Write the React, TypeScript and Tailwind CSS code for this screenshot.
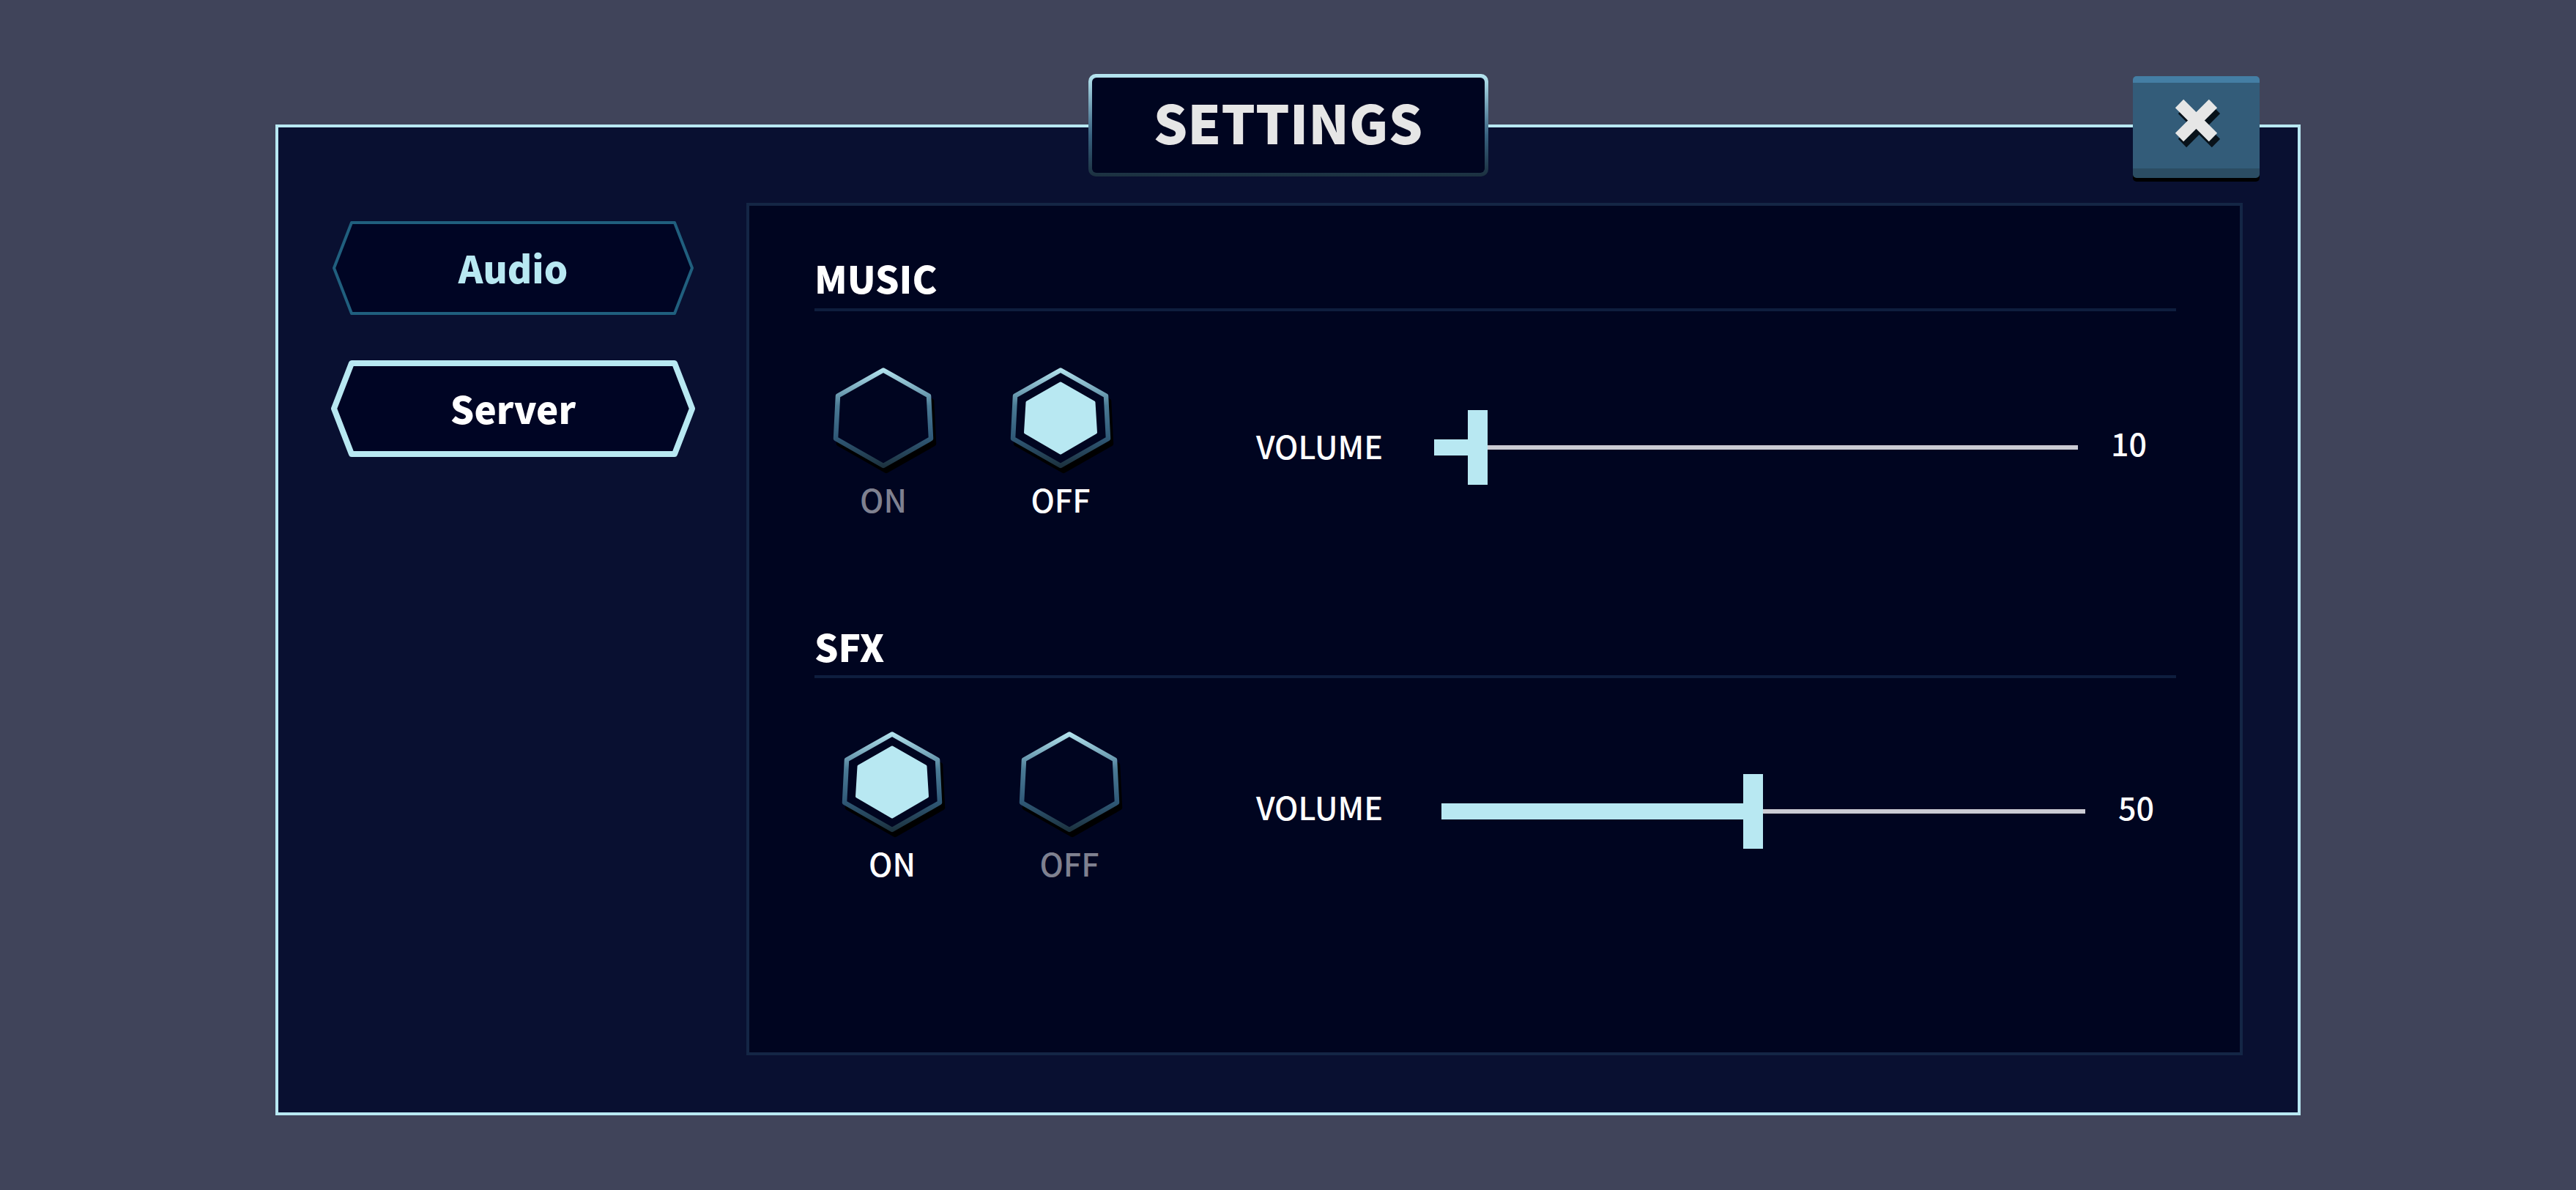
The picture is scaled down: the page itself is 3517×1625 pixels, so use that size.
import { useId, useState } from "react";

const VOLUME_MIN = 5;
const VOLUME_MAX = 98;
const THUMB = 27;

type ChannelProps = {
  title: string;
  name: string;
  initialOn: boolean;
  initialVolume: number;
  className?: string;
  titleClass: string;
  rowClass: string;
  optionsClass: string;
  labelClass: string;
};

function HexToggle({ name, label, checked, onSelect }: { name: string; label: string; checked: boolean; onSelect: () => void }) {
  const gradient = useId();
  return (
    <label className={`flex w-[150px] cursor-pointer flex-col items-center gap-[5px] ${checked ? "text-white" : "text-[#7f8190]"}`}>
      <input type="radio" name={name} className="sr-only" checked={checked} onChange={onSelect} />
      <svg viewBox="0 0 150 148" className="h-[148px] w-[150px]" aria-hidden="true">
        <defs>
          <linearGradient id={gradient} gradientUnits="userSpaceOnUse" x1="0" y1="2" x2="0" y2="139">
            <stop offset="0" stopColor="#b8e8f2" />
            <stop offset="0.38" stopColor="#4a7a95" />
            <stop offset="0.68" stopColor="#315b7a" />
            <stop offset="1" stopColor="#1b303c" />
          </linearGradient>
        </defs>
        <path d="M79 12.5 141 47.5 144 106 79 143 14 106 17 47.5Z" fill="#000" stroke="#000" strokeWidth="6.5" strokeLinejoin="round" />
        <path d="M75 5.5 137 40.5 140 99 75 136 10 99 13 40.5Z" fill="#000520" stroke={`url(#${gradient})`} strokeWidth="6.5" strokeLinejoin="round" />
        {checked && (
          <path d="M75 23.500 120.500 49.500 123 90.500 75 118.500 27 90.500 29.500 49.500Z" fill="#b8e8f2" stroke="#b8e8f2" strokeWidth="4" strokeLinejoin="round" />
        )}
      </svg>
      <span className="text-[43px] leading-[56px] font-medium">{label}</span>
    </label>
  );
}

function Channel({ title, name, initialOn, initialVolume, className = "", titleClass, rowClass, optionsClass, labelClass }: ChannelProps) {
  const [on, setOn] = useState(initialOn);
  const [volume, setVolume] = useState(initialVolume);
  const sliderId = useId();
  const ratio = (volume - VOLUME_MIN) / (VOLUME_MAX - VOLUME_MIN);
  return (
    <section className={className}>
      <h2 className={`border-b-4 border-[#0e1e3e] text-[51px] leading-[76px] font-black text-white ${titleClass}`}>{title}</h2>
      <div className={`grid items-start ${rowClass}`}>
        <div role="radiogroup" aria-label={title} className={`flex gap-[92px] ${optionsClass}`}>
          <HexToggle name={name} label="ON" checked={on} onSelect={() => setOn(true)} />
          <HexToggle name={name} label="OFF" checked={!on} onSelect={() => setOn(false)} />
        </div>
        <label htmlFor={sliderId} className={`mt-[60px] flex h-[102px] items-center text-[43px] leading-[56px] font-medium text-white ${labelClass}`}>
          VOLUME
        </label>
        <input
          id={sliderId}
          type="range"
          min={VOLUME_MIN}
          max={VOLUME_MAX}
          value={volume}
          onChange={(e) => setVolume(Number(e.target.value))}
          className="mt-[60px] h-[102px] w-full min-w-0 cursor-pointer appearance-none bg-[linear-gradient(#b8e8f2,#b8e8f2),linear-gradient(#cbccd4,#cbccd4)] bg-[position:left_center] bg-no-repeat [&::-webkit-slider-thumb]:h-[102px] [&::-webkit-slider-thumb]:w-[27px] [&::-webkit-slider-thumb]:appearance-none [&::-webkit-slider-thumb]:bg-[#b8e8f2]"
          style={{ backgroundSize: `calc((100% - ${THUMB}px) * ${ratio} + ${THUMB / 2}px) 22px, 100% 6px` }}
        />
        <output htmlFor={sliderId} className="mt-[60px] flex h-[102px] items-center pb-[14px] pl-[45px] text-[43px] leading-[56px] font-medium text-white">
          {volume}
        </output>
      </div>
    </section>
  );
}

function TabButton({ label, highlighted }: { label: string; highlighted: boolean }) {
  return (
    <button type="button" className="relative flex h-[132px] w-full items-center justify-center">
      <svg viewBox="0 0 497 132" className="absolute inset-0 h-full w-full" aria-hidden="true">
        <path
          d="M4 66 28 4H469L493 66 469 128H28Z"
          fill="#000524"
          stroke={highlighted ? "#b8e8f2" : "#205f7e"}
          strokeWidth={highlighted ? 8 : 4}
          strokeLinejoin="round"
        />
      </svg>
      <span className={`relative pb-[2px] text-[51px] leading-[76px] font-black ${highlighted ? "text-white" : "text-[#b8e8f2]"}`}>{label}</span>
    </button>
  );
}

export default function App() {
  return (
    <div className="min-h-screen bg-[#40445a] px-[376px] pt-[170px] pb-[101px] font-['Noto_Sans_CJK_SC',sans-serif]">
      <main className="relative flex gap-[70px] border-4 border-[#b8e8f2] bg-[#091031] pt-[103px] pr-[75px] pb-[78px] pl-[72px]">
        <div className="absolute -top-[73px] left-1/2 w-[546px] -translate-x-1/2 rounded-[10px] bg-linear-to-b from-[#b8e8f2] via-[#37617f] via-60% to-[#1b303f] p-[5px]">
          <h1 className="rounded-[6px] bg-[#000520] pb-[12px] text-center text-[73px] leading-[118px] font-black text-[#e6e6e6]">SETTINGS</h1>
        </div>
        <button
          type="button"
          aria-label="Close"
          className="absolute -top-[70px] right-[52px] flex h-[139px] w-[173px] items-center justify-center rounded-[5px] border-t-[9px] border-b-[13px] border-t-[#447ea4] border-b-[#2b4d63] bg-[#335c79] shadow-[0_5px_0_#000]"
        >
          <svg viewBox="-2 0 64 68" className="mb-[6px] h-[68px] w-[64px]" aria-hidden="true">
            <g strokeWidth="16" fill="none">
              <path d="M10.500 14.500 56.500 60.500M56.500 14.500 10.500 60.500" stroke="#08121a" />
              <path d="M6.500 6.500 52.500 52.500M52.500 6.500 6.500 52.500" stroke="#e6e6e6" />
            </g>
          </svg>
        </button>

        <nav aria-label="Settings categories" className="mt-[23px] flex w-[497px] shrink-0 flex-col gap-[60px]">
          <TabButton label="Audio" highlighted={false} />
          <TabButton label="Server" highlighted />
        </nav>

        <div className="min-w-0 flex-1 border-4 border-[#142645] bg-[#000520] pt-[60px] pr-[87px] pb-[231px] pl-[89px]">
          <Channel
            title="MUSIC"
            name="music"
            initialOn={false}
            initialVolume={10}
            titleClass="pb-[4px]"
            rowClass="mt-[75px] grid-cols-[603px_243px_1fr_134px]"
            optionsClass="pl-[19px]"
            labelClass="pb-[6px]"
          />
          <Channel
            title="SFX"
            name="sfx"
            initialOn
            initialVolume={50}
            className="mt-[135px]"
            titleClass="pb-[2px]"
            rowClass="mt-[71px] grid-cols-[603px_253px_1fr_124px]"
            optionsClass="pl-[31px]"
            labelClass="pb-[14px]"
          />
        </div>
      </main>
    </div>
  );
}
